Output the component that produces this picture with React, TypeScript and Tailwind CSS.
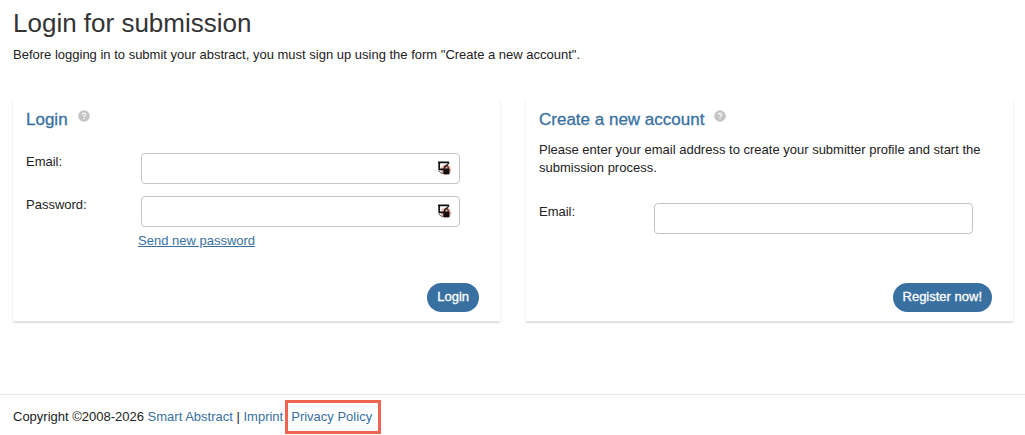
import React from 'react'

interface FieldProps {
  id: string
  label: string
  type: string
  manager?: boolean
}

/** Badge that a password manager puts inside the input */
function ManagerIcon() {
  return (
    <svg
      className="absolute right-2 top-2 pointer-events-none"
      width="16"
      height="16"
      viewBox="0 0 16 16"
      aria-hidden
    >
      <circle cx="10" cy="8.8" r="5.2" fill="#efb5ad" />
      <path d="M2 1.3H13M3.2 1V8.4H8.2" fill="none" stroke="#111" strokeWidth="1.7" />
      <path d="M2.6 9.6L5 12.2H7" fill="none" stroke="#555" strokeWidth="1" />
      <path d="M8 7L13.2 1.6" stroke="#222" strokeWidth="1.3" />
      <path d="M8.6 8V6.6a1.8 1.8 0 0 1 3.6 0V8" fill="none" stroke="#2b1715" strokeWidth="1.1" />
      <rect x="7.3" y="7.6" width="6.2" height="5.6" rx="0.4" fill="#140c0c" />
    </svg>
  )
}

function HelpIcon() {
  return (
    <button type="button" aria-label="Help" className="cursor-pointer">
      <svg width="12" height="12" viewBox="0 0 12 12" aria-hidden>
        <circle cx="6" cy="6" r="5.8" fill="#c4c4c4" />
        <path
          d="M4.3 4.7C4.3 2.6 7.8 2.7 7.7 4.7C7.6 5.8 6 5.8 6 7.2"
          fill="none"
          stroke="#fff"
          strokeWidth="1.1"
        />
        <rect x="5.4" y="8.1" width="1.2" height="1.2" fill="#fff" />
      </svg>
    </button>
  )
}

function Field({ id, label, type, manager }: FieldProps) {
  return (
    <div className="flex">
      <label htmlFor={id} className="w-[115px] shrink-0">{label}</label>
      <div className="relative flex-1">
        <input
          id={id}
          type={type}
          className="block w-full h-[31px] px-2 bg-white border border-[#c4c4c4] rounded-[4px] outline-none focus:border-[#3870a2]"
        />
        {manager && <ManagerIcon />}
      </div>
    </div>
  )
}

function Panel({ title, children }: { title: string; children: React.ReactNode }) {
  return (
    <section className="flex flex-col min-h-[223px] px-[13px] pt-3 pb-[9px] bg-white shadow-[0_2px_2px_rgba(0,0,0,0.14)]">
      <div className="flex items-start gap-[10px]">
        <h2 className="text-[17px] leading-[20px] font-medium text-[#3870a2] [-webkit-text-stroke:0.3px_#3870a2]">
          {title}
        </h2>
        <HelpIcon />
      </div>
      {children}
    </section>
  )
}

const buttonClass =
  'self-end mt-auto mr-2 h-[29px] px-[10px] pb-[2px] rounded-full bg-[#3870a2] text-white cursor-pointer [-webkit-text-stroke:0.3px_#fff]'

export default function App() {
  return (
    <div className="bg-white text-[#222] text-[13px] leading-[18px] font-['Liberation_Sans',Arial,sans-serif]">
      <main className="pl-[13px] pr-3">
        <h1 className="pt-[6px] text-[26px] leading-[34px] text-[#333]">Login for submission</h1>
        <p className="mt-[6px]">
          Before logging in to submit your abstract, you must sign up using the form "Create a new account".
        </p>

        <div className="grid grid-cols-2 gap-[26px] mt-[34px]">
          <Panel title="Login">
            <form className="flex flex-col flex-1" onSubmit={(e) => e.preventDefault()}>
              <div className="flex flex-col gap-3 mt-[23px] pr-[27px]">
                <Field id="login-email" label="Email:" type="email" manager />
                <Field id="login-password" label="Password:" type="password" manager />
              </div>
              <a href="#reset" className="self-start mt-[5px] ml-[112px] text-[#3870a2] underline">
                Send new password
              </a>
              <button type="submit" className={buttonClass}>Login</button>
            </form>
          </Panel>

          <Panel title="Create a new account">
            <form className="flex flex-col flex-1" onSubmit={(e) => e.preventDefault()}>
              <p className="mt-[11px]">
                Please enter your email address to create your submitter profile and start the submission process.
              </p>
              <div className="mt-[26px] pr-[27px]">
                <Field id="register-email" label="Email:" type="email" />
              </div>
              <button type="submit" className={buttonClass}>Register now!</button>
            </form>
          </Panel>
        </div>
      </main>

      <footer className="flex items-center mt-[73px] pt-[5px] pl-[13px] border-t border-[#e8e8e8]">
        <span>
          Copyright ©2008-2026 <a href="#home" className="text-[#3870a2]">Smart Abstract</a> |{' '}
          <a href="#imprint" className="text-[#3870a2]">Imprint</a>
        </span>
        <a href="#privacy" className="ml-[2px] pl-[3px] pr-[6px] py-[5px] border-3 border-[#ee6352] text-[#3870a2]">
          Privacy Policy
        </a>
      </footer>
    </div>
  )
}
